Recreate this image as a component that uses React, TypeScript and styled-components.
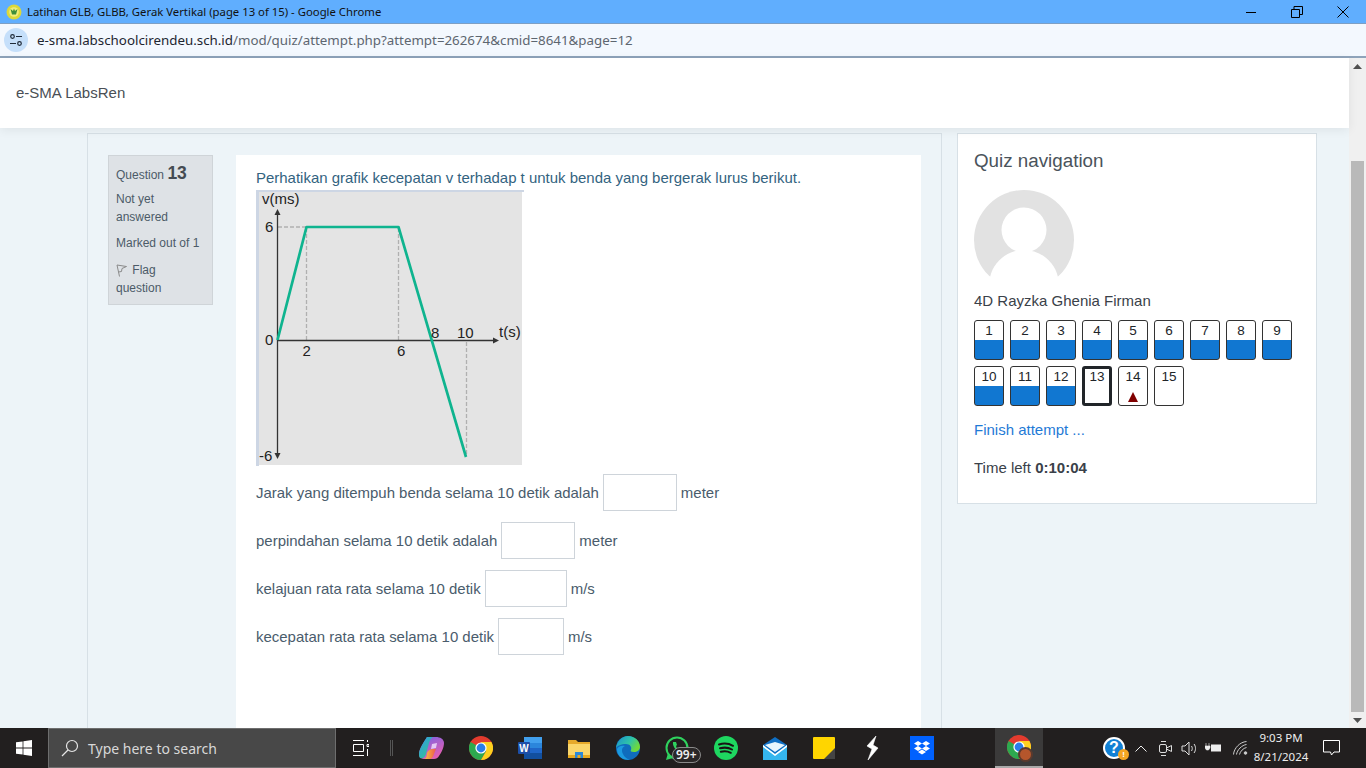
import React from "react";
import styled, { createGlobalStyle } from "styled-components";

const GlobalStyle = createGlobalStyle`
  html, body {
    margin: 0;
    padding: 0;
    height: 100%;
    overflow: hidden;
    font-family: "Liberation Sans", Arial, sans-serif;
  }
  * { box-sizing: border-box; }
`;

const rows = [
  { label: "Jarak yang ditempuh benda selama 10 detik adalah", width: 74, unit: "meter" },
  { label: "perpindahan selama 10 detik adalah", width: 74, unit: "meter" },
  { label: "kelajuan rata rata selama 10 detik", width: 82, unit: "m/s" },
  { label: "kecepatan rata rata selama 10 detik", width: 66, unit: "m/s" },
];

const navItems = [1, 2, 3, 4, 5, 6, 7, 8, 9, 10, 11, 12, 13, 14, 15];

const Graph = () => (
  <GraphSvg width="268" height="276" viewBox="0 0 268 276">
    <rect x="0" y="0" width="268" height="276" fill="#cdd6e4" />
    <rect x="3" y="2" width="263" height="273" fill="#e4e4e4" />
    <rect x="266" y="2" width="2" height="274" fill="#fff" />
    <rect x="3" y="275" width="265" height="1" fill="#fff" />
    <g stroke="#b0b0b0" strokeWidth="1.3" strokeDasharray="4 2" fill="none">
      <path d="M22 37H50" />
      <path d="M50.5 38V150" />
      <path d="M142.500 38V150" />
      <path d="M210.500 152V266" />
    </g>
    <g stroke="#333" strokeWidth="1.3" fill="none">
      <path d="M21.500 24V264" />
      <path d="M21 150.500H238" />
    </g>
    <g fill="#333">
      <path d="M21.500 19l3 6h-6z" />
      <path d="M21.500 269l3-6h-6z" />
      <path d="M243 150.500l-6-3v6z" />
    </g>
    <path d="M21.500 150L50.500 37H142.500L210 267" stroke="#0fb48f" strokeWidth="2.700" fill="none" strokeLinejoin="round" />
    <GraphLabel x="6" y="14">v(ms)</GraphLabel>
    <GraphLabel x="9" y="42">6</GraphLabel>
    <GraphLabel x="9" y="155">0</GraphLabel>
    <GraphLabel x="46.500" y="166">2</GraphLabel>
    <GraphLabel x="141" y="166">6</GraphLabel>
    <GraphLabel x="175" y="148">8</GraphLabel>
    <GraphLabel x="201" y="148">10</GraphLabel>
    <GraphLabel x="243" y="147">t(s)</GraphLabel>
    <GraphLabel x="3" y="271">-6</GraphLabel>
  </GraphSvg>
);

const Chrome = ({ size = 24 }: { size?: number }) => (
  <svg width={size} height={size} viewBox="0 0 24 24">
    <circle cx="12" cy="12" r="12" fill="#e33b2e" />
    <path d="M12 12L1.600 6A12 12 0 0 0 12 24l5.200-9z" fill="#2da94f" />
    <path d="M12 6h10.400A12 12 0 0 1 12 24l5.200-9z" fill="#fdd01f" />
    <circle cx="12" cy="12" r="5.600" fill="#fff" />
    <circle cx="12" cy="12" r="4.400" fill="#2b7de9" />
  </svg>
);

export default function App() {
  return (
    <Screen>
      <GlobalStyle />
      <TitleBar>
        <Favicon>
          <svg width="16" height="16" viewBox="0 0 16 16">
            <circle cx="8" cy="8" r="7.500" fill="#dcd83a" />
            <circle cx="8" cy="8" r="4.800" fill="#f2ee7a" />
            <path d="M4.500 5l2.500 2 1-2.500 1 2.500 2.500-2L10 10.500H6z" fill="#3f8f3a" />
          </svg>
        </Favicon>
        <TitleText>Latihan GLB, GLBB, Gerak Vertikal (page 13 of 15) - Google Chrome</TitleText>
        <WindowControls>
          <WindowButton>
            <svg width="12" height="12" viewBox="0 0 12 12"><path d="M1 6.500h10" stroke="#000" fill="none" /></svg>
          </WindowButton>
          <WindowButton>
            <svg width="12" height="12" viewBox="0 0 12 12"><path d="M.5 3.500h8v8h-8zM3 3.500V.5h8.500v8h-3" stroke="#000" fill="none" /></svg>
          </WindowButton>
          <WindowButton>
            <svg width="12" height="12" viewBox="0 0 12 12"><path d="M.5.500l11 11M11.500.500l-11 11" stroke="#000" fill="none" /></svg>
          </WindowButton>
        </WindowControls>
      </TitleBar>
      <AddressBar>
        <SiteChip>
          <svg width="14" height="14" viewBox="0 0 14 14" fill="none" stroke="#1f2a38" strokeWidth="1.200">
            <circle cx="3.500" cy="3.500" r="1.800" />
            <path d="M7 3.500h6M1 10.500h6" />
            <circle cx="10.500" cy="10.500" r="1.800" />
          </svg>
        </SiteChip>
        <Url>
          e-sma.labschoolcirendeu.sch.id<UrlPath>/mod/quiz/attempt.php?attempt=262674&amp;cmid=8641&amp;page=12</UrlPath>
        </Url>
      </AddressBar>
      <Viewport>
        <Page>
          <Header>e-SMA LabsRen</Header>
          <Columns>
            <MainRegion>
              <QuestionInfo>
                <QuestionNo>Question <strong>13</strong></QuestionNo>
                <InfoLine $gap={6}>Not yet answered</InfoLine>
                <InfoLine $gap={8}>Marked out of 1</InfoLine>
                <InfoLine $gap={9}>
                  <FlagIcon width="12" height="13" viewBox="0 0 12 13" fill="none" stroke="#8a8a8a">
                    <path d="M3.500 12.500L1 1l9.500 1.500L6 4.500l-.5 3L2.500 8" />
                  </FlagIcon>
                  {" "}Flag question
                </InfoLine>
              </QuestionInfo>
              <QuestionBody>
                <Prompt>Perhatikan grafik kecepatan v terhadap t untuk benda yang bergerak lurus berikut.</Prompt>
                <Graph />
                {rows.map((row) => (
                  <AnswerRow key={row.label}>
                    {row.label}
                    <AnswerInput $width={row.width} />
                    {row.unit}
                  </AnswerRow>
                ))}
              </QuestionBody>
            </MainRegion>
            <NavBlock>
              <NavTitle>Quiz navigation</NavTitle>
              <AvatarSvg width="100" height="100" viewBox="0 0 100 100">
                <circle cx="50" cy="50" r="50" fill="#e2e2e2" />
                <circle cx="50" cy="40" r="22.500" fill="#fff" />
                <path d="M16 87C20 70 35 60 50 60s30 10 34 27V100H16z" fill="#fff" />
              </AvatarSvg>
              <UserName>4D Rayzka Ghenia Firman</UserName>
              <NavGrid>
                {navItems.map((n) => (
                  <NavButton key={n} $answered={n < 13} $current={n === 13}>
                    {n}
                    {n === 14 && <FlagMark />}
                  </NavButton>
                ))}
              </NavGrid>
              <FinishLink>Finish attempt ...</FinishLink>
              <TimeLeft>Time left <strong>0:10:04</strong></TimeLeft>
            </NavBlock>
          </Columns>
        </Page>
        <Scrollbar>
          <ScrollArrow>
            <svg width="9" height="5" viewBox="0 0 9 5"><path d="M4.500 0L9 5H0z" fill="#505050" /></svg>
          </ScrollArrow>
          <ScrollTrack>
            <ScrollThumb />
          </ScrollTrack>
          <ScrollArrow>
            <svg width="9" height="5" viewBox="0 0 9 5"><path d="M4.500 5L9 0H0z" fill="#505050" /></svg>
          </ScrollArrow>
        </Scrollbar>
      </Viewport>
      <Taskbar>
        <StartButton>
          <svg width="16" height="16" viewBox="0 0 16 16" fill="#fff">
            <path d="M0 2.300l6.600-.9v6.200H0zM7.400 1.300L16 0v7.600H7.400zM0 8.400h6.600v6.200L0 13.700zM7.400 8.400H16V16l-8.600-1.300z" />
          </svg>
        </StartButton>
        <SearchBox>
          <svg width="18" height="18" viewBox="0 0 18 18" fill="none" stroke="#e6e6e6" strokeWidth="1.200">
            <circle cx="11" cy="7" r="5.500" />
            <path d="M7 11l-6 6" />
          </svg>
          <SearchText>Type here to search</SearchText>
        </SearchBox>
        <TaskSlot $width={50}>
          <svg width="16" height="16" viewBox="0 0 16 16" fill="none" stroke="#fff">
            <path d="M0 .5h11M0 15.500h11M.5 4.500h10v7H.5zM14.500 0v2M14 4.500h2v2h-2zM14.500 9v7" />
          </svg>
        </TaskSlot>
        <TaskDivider />
        <TaskIcons>
          <TaskSlot $width={50}>
            <svg width="25" height="24" viewBox="0 0 25 24">
              <defs>
                <linearGradient id="copilotA" x1="0" y1="0" x2="0.800" y2="1">
                  <stop offset="0" stopColor="#2f9be8" />
                  <stop offset="1" stopColor="#35c38f" />
                </linearGradient>
                <linearGradient id="copilotB" x1="0" y1="0" x2="0.600" y2="1">
                  <stop offset="0" stopColor="#6f62ea" />
                  <stop offset="1" stopColor="#e65fb0" />
                </linearGradient>
                <linearGradient id="copilotC" x1="0" y1="0" x2="1" y2="0">
                  <stop offset="0" stopColor="#f6c93c" />
                  <stop offset="1" stopColor="#ee5a4f" />
                </linearGradient>
              </defs>
              <path d="M8 1h9c4 0 8 2 8 6 0 5-3 10-5 13-1 2-3 3-5 3H6c-4 0-6-2-6-5 0-5 5-12 8-17z" fill="url(#copilotB)" />
              <path d="M8 1h6c-2 1-3 3-4 6L7 18c-1 3-3 5-6 4-1-1-1-3-1-4 0-5 5-12 8-17z" fill="url(#copilotA)" />
              <path d="M8 17c1-3 4-4 6-4h3l-2 5c-1 3-2 5-5 5H5c2 0 3-3 3-6z" fill="url(#copilotC)" />
              <path d="M13 8l5-1-1 5-5 1z" fill="#e4c8f5" />
            </svg>
          </TaskSlot>
          <TaskSlot $width={49}><Chrome /></TaskSlot>
          <TaskSlot $width={49}>
            <svg width="24" height="22" viewBox="0 0 24 22">
              <rect x="6" y="0" width="18" height="22" rx="1" fill="#1f66c8" />
              <rect x="6" y="0" width="18" height="6" fill="#42a0ee" />
              <rect x="6" y="6" width="18" height="5" fill="#2b86dc" />
              <rect x="6" y="16" width="18" height="6" fill="#124f9e" />
              <rect x="0" y="5" width="12" height="12" rx="1" fill="#1d4fa8" />
              <text x="6" y="15" fill="#fff" fontSize="10" fontWeight="700" textAnchor="middle" fontFamily="Liberation Sans">W</text>
            </svg>
          </TaskSlot>
          <TaskSlot $width={49}>
            <svg width="22" height="20" viewBox="0 0 22 20">
              <path d="M0 2h8l2 2h12v16H0z" fill="#e6a92a" />
              <rect x="0" y="6" width="22" height="14" fill="#fbd66a" />
              <rect x="0" y="17" width="22" height="3" fill="#e9a91f" />
              <path d="M7 14h8v6h-2.500v-3h-3v3H7z" fill="#2b88d8" />
            </svg>
          </TaskSlot>
          <TaskSlot $width={49}>
            <svg width="24" height="24" viewBox="0 0 24 24">
              <defs>
                <linearGradient id="edgeTop" x1="0" y1="0" x2="1" y2="0.500">
                  <stop offset="0" stopColor="#1a8fd0" />
                  <stop offset="0.600" stopColor="#2fc4a8" />
                  <stop offset="1" stopColor="#6fd93b" />
                </linearGradient>
              </defs>
              <circle cx="12" cy="12" r="12" fill="#0f6cbd" />
              <path d="M0 12C1 5 6 0 12 0c7 0 12 5 12 11 0 3-3 5-6 5-3 0-4-1-3-2 1-3-1-6-5-6C5 8 1 10 0 12z" fill="url(#edgeTop)" />
              <path d="M9 10c-3 1-4 5-2 8 1 2 3 5 7 5.500C7 25 1 20 1 13c1-2 4-4 8-3z" fill="#1c9ae0" />
            </svg>
          </TaskSlot>
          <TaskSlot $width={49}>
            <svg width="24" height="24" viewBox="0 0 24 24" fill="none">
              <circle cx="12" cy="12" r="10.500" stroke="#2fd25e" strokeWidth="2" />
              <path d="M1 24l2-7 5 5z" fill="#2fd25e" />
              <path d="M8 6c-1 5 5 11 10 11l1-3-3-1-1 1c-2-.5-3.500-2-4-4l1-1-1-3z" fill="#2fd25e" />
            </svg>
            <CountBadge>99+</CountBadge>
          </TaskSlot>
          <TaskSlot $width={49}>
            <svg width="24" height="24" viewBox="0 0 24 24">
              <circle cx="12" cy="12" r="12" fill="#1ed760" />
              <path d="M5 8.500c5-1.500 10-1 14 1.300M6 12.300c4.500-1.200 8.500-.8 12 1.200M6.800 15.800c3.500-.9 7-.6 10 1" stroke="#191414" strokeWidth="2" strokeLinecap="round" fill="none" />
            </svg>
          </TaskSlot>
          <TaskSlot $width={49}>
            <svg width="24" height="23" viewBox="0 0 24 23">
              <path d="M12 0l12 8v15H0V8z" fill="#0f6fc4" />
              <path d="M0 8l12 9 12-9v15H0z" fill="#35b6ee" />
              <path d="M2 8l10-3 10 3-10 7z" fill="#e7f6fd" />
              <path d="M0 8l12 9L24 8v2L12 19 0 10z" fill="#fff" />
            </svg>
          </TaskSlot>
          <TaskSlot $width={49}>
            <svg width="22" height="22" viewBox="0 0 22 22">
              <rect width="22" height="22" rx="1" fill="#ffd500" />
              <path d="M22 11v11H11z" fill="#444" />
            </svg>
          </TaskSlot>
          <TaskSlot $width={49}>
            <svg width="13" height="24" viewBox="0 0 13 24">
              <path d="M10 0L1 10l5 3-4 11 10-12-5-3z" fill="#fff" stroke="#fff" strokeWidth=".6" />
            </svg>
          </TaskSlot>
          <TaskSlot $width={49}>
            <svg width="24" height="24" viewBox="0 0 24 24">
              <rect width="24" height="24" fill="#0061fe" />
              <path d="M8 5l4 2.500L8 10 4 7.500zM16 5l4 2.500L16 10l-4-2.500zM8 10l4 2.500L8 15l-4-2.500zM16 10l4 2.500-4 2.500-4-2.500zM8 16l4-2.500 4 2.500-4 2.500z" fill="#fff" />
            </svg>
          </TaskSlot>
        </TaskIcons>
        <ActiveApp>
          <Chrome />
          <ChromeBadge />
        </ActiveApp>
        <Tray>
          <HelpIcon>
            ?
            <HelpDot>!</HelpDot>
          </HelpIcon>
          <TrayIcon $width={24}>
            <svg width="12" height="7" viewBox="0 0 12 7" fill="none" stroke="#eee"><path d="M.5 6.500L6 1l5.500 5.500" /></svg>
          </TrayIcon>
          <TrayIcon $width={24}>
            <svg width="15" height="17" viewBox="0 0 15 17" fill="none" stroke="#ddd">
              <rect x="1.500" y="4.500" width="7" height="8" rx="1.500" />
              <path d="M8.500 8l5-2.500v6l-5-2.500M3 1.500h5M3 15.500h5" />
            </svg>
          </TrayIcon>
          <TrayIcon $width={24}>
            <svg width="17" height="15" viewBox="0 0 17 15" fill="none" stroke="#ddd">
              <path d="M1 5h3l4-4v13l-4-4H1zM10.500 5c1 1.500 1 3.500 0 5M13 3c2 2.500 2 6.500 0 9" />
            </svg>
          </TrayIcon>
          <TrayIcon $width={24}>
            <svg width="17" height="12" viewBox="0 0 17 12">
              <path d="M1 1v3M4 1v3M0 4h5v2l-1.500 2h-2L0 6z" fill="#eee" stroke="#eee" strokeWidth=".6" />
              <rect x="6" y="2.500" width="10" height="7" fill="#eee" />
            </svg>
          </TrayIcon>
          <TrayIcon $width={30}>
            <svg width="15" height="14" viewBox="0 0 15 14" fill="none" stroke="#ccc">
              <path d="M.5 13.500C1 7 7 1 13.500.500M3.500 13.500C4 9 9 4 13.500 3.500M6.500 13.500c.5-3 4-6.500 7-7" />
              <circle cx="12.500" cy="12" r="1.300" fill="#ccc" />
            </svg>
          </TrayIcon>
          <Clock>
            <span>9:03 PM</span>
            <span>8/21/2024</span>
          </Clock>
          <NotifyButton>
            <svg width="17" height="16" viewBox="0 0 17 16" fill="none" stroke="#fff">
              <path d="M.5.500h16v11.500h-5.500l-2.500 3-1-3H.5z" />
            </svg>
          </NotifyButton>
        </Tray>
      </Taskbar>
    </Screen>
  );
}

const Screen = styled.div`
  width: 1366px;
  height: 768px;
  display: flex;
  flex-direction: column;
  overflow: hidden;
  background: #edf4f8;
`;

const TitleBar = styled.div`
  height: 24px;
  flex: none;
  display: flex;
  align-items: center;
  padding-left: 6px;
  background: #60aefe;
  border-bottom: 1px solid #7d9fc4;
`;

const Favicon = styled.div`
  width: 16px;
  height: 16px;
  display: flex;
`;

const TitleText = styled.div`
  margin-left: 5px;
  font-family: "Noto Sans", sans-serif;
  font-size: 11.340px;
  color: #111;
  flex: 1;
`;

const WindowControls = styled.div`
  display: flex;
  align-items: center;
  height: 100%;
`;

const WindowButton = styled.div`
  width: 46px;
  height: 100%;
  display: flex;
  align-items: center;
  justify-content: center;
`;

const AddressBar = styled.div`
  height: 34px;
  flex: none;
  display: flex;
  align-items: center;
  padding-left: 4px;
  background: #f3f8fe;
  border-bottom: 2px solid #8ea3ba;
`;

const SiteChip = styled.div`
  width: 24px;
  height: 24px;
  border-radius: 50%;
  background: #c5dffa;
  display: flex;
  align-items: center;
  justify-content: center;
`;

const Url = styled.div`
  margin-left: 9px;
  font-family: "Noto Sans", sans-serif;
  font-size: 13.330px;
  color: #1d2530;
`;

const UrlPath = styled.span`
  color: #5d6670;
`;

const Viewport = styled.div`
  flex: 1;
  min-height: 0;
  display: flex;
`;

const Page = styled.div`
  flex: 1;
  min-width: 0;
  display: flex;
  flex-direction: column;
`;

const Header = styled.div`
  height: 70px;
  flex: none;
  display: flex;
  align-items: center;
  padding: 0 0 2px 16px;
  background: #fff;
  font-size: 15px;
  color: #4a4f55;
  box-shadow: 0 2px 10px rgba(0, 0, 0, 0.07);
  position: relative;
  z-index: 1;
`;

const Columns = styled.div`
  flex: 1;
  min-height: 0;
  display: flex;
  align-items: flex-start;
  gap: 15px;
  padding: 5px 0 0 87px;
`;

const MainRegion = styled.div`
  width: 855px;
  height: 100%;
  display: flex;
  align-items: flex-start;
  gap: 23px;
  padding: 21px 20px 0 20px;
  border: 1px solid #d7e0e6;
  border-bottom: none;
`;

const QuestionInfo = styled.div`
  width: 105px;
  height: 150px;
  flex: none;
  padding: 8px 11px 0 7px;
  background: #dee2e6;
  border: 1px solid #cfd4d8;
  font-size: 12px;
  line-height: 18px;
  color: #4c5b68;
`;

const QuestionNo = styled.div`
  line-height: 18px;
  strong {
    font-size: 17.500px;
    color: #454b52;
  }
`;

const InfoLine = styled.div<{ $gap: number }>`
  margin-top: ${(p) => p.$gap}px;
`;

const FlagIcon = styled.svg`
  vertical-align: -3px;
  margin-right: 1px;
`;

const QuestionBody = styled.div`
  flex: 1;
  height: 100%;
  padding: 14px 20px 0;
  background: #fff;
  font-size: 14.970px;
  color: #4a5c6c;
`;

const Prompt = styled.div`
  line-height: 18px;
  color: #33637f;
  margin-bottom: 3px;
  white-space: nowrap;
`;

const GraphSvg = styled.svg`
  display: block;
  margin-bottom: 8px;
`;

const GraphLabel = styled.text`
  font-family: "Liberation Sans", sans-serif;
  font-size: 15px;
  fill: #222;
`;

const AnswerRow = styled.div`
  height: 37px;
  margin-bottom: 11px;
  display: flex;
  align-items: center;
  white-space: pre;
`;

const AnswerInput = styled.div<{ $width: number }>`
  width: ${(p) => p.$width}px;
  height: 37px;
  margin: 0 4px;
  background: #fff;
  border: 1px solid #ced4da;
`;

const NavBlock = styled.div`
  width: 360px;
  height: 371px;
  flex: none;
  padding: 16px;
  background: #fff;
  border: 1px solid #d7e0e6;
  color: #3a4149;
`;

const NavTitle = styled.div`
  font-size: 18.800px;
  line-height: 22px;
  color: #4a535b;
  margin-bottom: 18px;
`;

const AvatarSvg = styled.svg`
  display: block;
`;

const UserName = styled.div`
  margin-top: 1px;
  font-size: 15px;
  line-height: 20px;
  color: #3a4149;
`;

const NavGrid = styled.div`
  margin-top: 9px;
  display: grid;
  grid-template-columns: repeat(9, 30px);
  grid-auto-rows: 40px;
  gap: 6px;
`;

const NavButton = styled.div<{ $answered: boolean; $current: boolean }>`
  position: relative;
  border: ${(p) => (p.$current ? "3px solid #212529" : "1px solid #333")};
  border-radius: 3px;
  font-size: 13.500px;
  line-height: ${(p) => (p.$current ? "16px" : "20px")};
  text-align: center;
  color: #212529;
  background: ${(p) =>
    p.$answered ? "linear-gradient(#fff 0, #fff 19px, #1177d1 19px, #1177d1 100%)" : "#fff"};
`;

const FlagMark = styled.span`
  position: absolute;
  left: 9px;
  bottom: 3px;
  width: 0;
  height: 0;
  border-left: 5px solid transparent;
  border-right: 5px solid transparent;
  border-bottom: 10px solid #800000;
`;

const FinishLink = styled.div`
  margin-top: 15px;
  font-size: 15px;
  line-height: 18px;
  color: #1f7ad6;
`;

const TimeLeft = styled.div`
  margin-top: 20px;
  font-size: 15px;
  line-height: 18px;
  color: #3a4149;
`;

const Scrollbar = styled.div`
  width: 17px;
  flex: none;
  display: flex;
  flex-direction: column;
  background: #f0f0f0;
`;

const ScrollArrow = styled.div`
  height: 17px;
  flex: none;
  display: flex;
  align-items: center;
  justify-content: center;
`;

const ScrollTrack = styled.div`
  flex: 1;
  padding: 86px 2px 0;
`;

const ScrollThumb = styled.div`
  height: 551px;
  background: #b9b9b9;
`;

const Taskbar = styled.div`
  height: 40px;
  flex: none;
  display: flex;
  align-items: center;
  background: #221f1f;
`;

const StartButton = styled.div`
  width: 48px;
  height: 100%;
  display: flex;
  align-items: center;
  justify-content: center;
`;

const SearchBox = styled.div`
  width: 288px;
  height: 100%;
  display: flex;
  align-items: center;
  padding-left: 12px;
  background: #484848;
  border: 1px solid #6e6e6e;
`;

const SearchText = styled.div`
  margin-left: 9px;
  font-family: "Noto Sans", sans-serif;
  font-size: 14px;
  color: #d8d8d8;
`;

const TaskIcons = styled.div`
  display: flex;
  align-items: center;
  height: 100%;
`;

const TaskSlot = styled.div<{ $width: number }>`
  position: relative;
  width: ${(p) => p.$width}px;
  height: 100%;
  display: flex;
  align-items: center;
  justify-content: center;
`;

const TaskDivider = styled.div`
  width: 3px;
  height: 16px;
  margin: 0 13px 0 4px;
  border-left: 1px solid #555;
  border-right: 1px solid #555;
`;

const CountBadge = styled.span`
  position: absolute;
  left: 20px;
  bottom: 5px;
  height: 16px;
  padding: 0 3px;
  border: 1px solid #8a8a8a;
  border-radius: 8px;
  background: #2a2727;
  font-family: "Noto Sans", sans-serif;
  font-size: 12px;
  font-weight: 600;
  line-height: 14px;
  color: #eee;
`;

const ActiveApp = styled.div`
  position: relative;
  width: 48px;
  height: 100%;
  margin-left: 49px;
  display: flex;
  align-items: center;
  justify-content: center;
  background: #3b3a3a;
  border-bottom: 2px solid #aaa;
`;

const ChromeBadge = styled.span`
  position: absolute;
  left: 23px;
  top: 19px;
  width: 15px;
  height: 15px;
  border-radius: 50%;
  background: #b5562c;
  border: 2px solid #5a3a2e;
`;

const Tray = styled.div`
  flex: 1;
  height: 100%;
  display: flex;
  align-items: center;
  padding-left: 60px;
  color: #eee;
`;

const HelpIcon = styled.div`
  position: relative;
  width: 22px;
  height: 22px;
  border-radius: 50%;
  background: #1180d4;
  border: 2px solid #fff;
  color: #fff;
  font-size: 16px;
  font-weight: 700;
  line-height: 18px;
  text-align: center;
  margin-right: 4px;
`;

const HelpDot = styled.span`
  position: absolute;
  right: -6px;
  bottom: -3px;
  width: 11px;
  height: 11px;
  border-radius: 50%;
  background: #f5a623;
  color: #fff;
  font-size: 8px;
  line-height: 11px;
`;

const TrayIcon = styled.div<{ $width: number }>`
  width: ${(p) => p.$width}px;
  display: flex;
  justify-content: center;
`;

const Clock = styled.div`
  width: 52px;
  display: flex;
  flex-direction: column;
  align-items: center;
  margin-bottom: 2px;
  font-family: "Noto Sans", sans-serif;
  font-size: 11.500px;
  line-height: 19px;
  color: #eee;
  white-space: nowrap;
`;

const NotifyButton = styled.div`
  margin-left: 16px;
  display: flex;
`;
